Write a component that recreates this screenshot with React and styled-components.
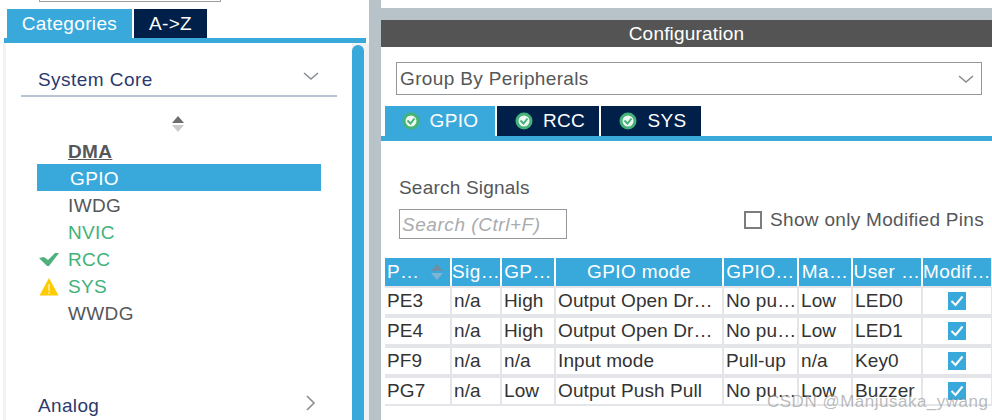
import React from 'react';
import styled, { createGlobalStyle } from 'styled-components';

const blue = '#39a9dc';
const navy = '#00204a';
const slate = '#b8c3c9';

const columns = '65px 48px 52px 166px 73px 52px 68px 68px';

const headers = ['P…', 'Sig…', 'GP…', 'GPIO mode', 'GPIO…', 'Ma…', 'User …', 'Modif…'];
const rows = [
  ['PE3', 'n/a', 'High', 'Output Open Dr…', 'No pu…', 'Low', 'LED0'],
  ['PE4', 'n/a', 'High', 'Output Open Dr…', 'No pu…', 'Low', 'LED1'],
  ['PF9', 'n/a', 'n/a', 'Input mode', 'Pull-up', 'n/a', 'Key0'],
  ['PG7', 'n/a', 'Low', 'Output Push Pull', 'No pu…', 'Low', 'Buzzer'],
];

const peripherals = [
  { name: 'DMA', kind: 'bold' },
  { name: 'GPIO', kind: 'selected' },
  { name: 'IWDG' },
  { name: 'NVIC', kind: 'green' },
  { name: 'RCC', kind: 'green', icon: 'check' },
  { name: 'SYS', kind: 'green', icon: 'warn' },
  { name: 'WWDG' },
];

const Chevron = ({ right }) => (
  <ChevronIcon width="16" height="16" viewBox="0 0 16 16">
    <path
      d={right ? 'M5 1l7 7-7 7' : 'M1 5l7 6 7-6'}
      fill="none"
      stroke="#8a8d90"
      strokeWidth="1.6"
    />
  </ChevronIcon>
);

const SortArrows = ({ light }) => (
  <svg width="14" height="18" viewBox="0 0 14 18">
    <path d="M7 1L13 8H1z" fill={light ? '#6f8ea3' : '#6b6d6e'} />
    <path d="M7 17L13 10H1z" fill={light ? '#7fb4d3' : '#c9cbcc'} />
  </svg>
);

const GreenCheck = () => (
  <svg width="20" height="16" viewBox="0 0 20 16">
    <path d="M0 6l5-1 4 3 7-7 4 0-10 13h-2z" fill="#4fb07e" />
  </svg>
);

const WarnIcon = () => (
  <svg width="20" height="18" viewBox="0 0 20 18">
    <path d="M10 0l9.500 17.500H.5z" fill="#fdcb00" />
    <path d="M9.500 6h1v7h-1z" fill="#fff" />
    <path d="M9.500 14h1v2h-1z" fill="#fff" />
  </svg>
);

const TabStatus = () => (
  <svg width="18" height="18" viewBox="0 0 18 18">
    <circle cx="9" cy="9" r="8.500" fill="#45b378" />
    <circle cx="9" cy="9" r="5.500" fill="#eef7f2" />
    <path d="M5.500 8.500l3 3 4-5" fill="none" stroke="#45b378" strokeWidth="2" />
  </svg>
);

const Tick = () => (
  <CheckBoxOn>
    <svg width="14" height="12" viewBox="0 0 14 12">
      <path d="M1.500 6l4 4 7-8.500" fill="none" stroke="#fff" strokeWidth="2" />
    </svg>
  </CheckBoxOn>
);

const App = () => (
  <Page>
    <GlobalStyle />
    <LeftPanel>
      <TreeSearch />
      <CategoryTabs>
        <CategoryTab $active>Categories</CategoryTab>
        <CategoryTab>A-&gt;Z</CategoryTab>
      </CategoryTabs>
      <TabRule />
      <TreeBody>
        <TreeContent>
          <GroupHead>
            <span>System Core</span>
            <Chevron />
          </GroupHead>
          <SortRow>
            <SortArrows />
          </SortRow>
          <PeripheralList>
            {peripherals.map((p) => (
              <Peripheral key={p.name} $kind={p.kind}>
                <StatusSlot $kind={p.kind}>
                  {p.icon === 'check' && <GreenCheck />}
                  {p.icon === 'warn' && <WarnIcon />}
                </StatusSlot>
                {p.name}
              </Peripheral>
            ))}
          </PeripheralList>
          <CollapsedGroup>
            <span>Analog</span>
            <Chevron right />
          </CollapsedGroup>
        </TreeContent>
        <ScrollBar />
      </TreeBody>
    </LeftPanel>
    <Gutter />
    <RightPanel>
      <TopStrip />
      <PanelTitle>Configuration</PanelTitle>
      <GroupSelect>
        <span>Group By Peripherals</span>
        <Chevron />
      </GroupSelect>
      <ModeTabs>
        <ModeTab $active $width={110}><TabStatus />GPIO</ModeTab>
        <ModeTab $width={102}><TabStatus />RCC</ModeTab>
        <ModeTab $width={100}><TabStatus />SYS</ModeTab>
      </ModeTabs>
      <SearchArea>
        <SearchColumn>
          <SearchLabel>Search Signals</SearchLabel>
          <SearchBox>Search (Ctrl+F)</SearchBox>
        </SearchColumn>
        <ModifiedToggle>
          <CheckBoxOff />
          Show only Modified Pins
        </ModifiedToggle>
      </SearchArea>
      <Table>
        <HeaderRow>
          {headers.map((h, i) => (
            <HeaderCell key={h} $first={i === 0}>
              {h}
              {i === 0 && <SortArrows light />}
            </HeaderCell>
          ))}
        </HeaderRow>
        {rows.map((row) => (
          <BodyRow key={row[0]}>
            {row.map((value, i) => (
              <BodyCell key={i}>{value}</BodyCell>
            ))}
            <TickCell>
              <Tick />
            </TickCell>
          </BodyRow>
        ))}
      </Table>
    </RightPanel>
    <Watermark>CSDN @Manjusaka_ywang</Watermark>
  </Page>
);

const GlobalStyle = createGlobalStyle`
  html, body {
    margin: 0;
    padding: 0;
    background: #fff;
  }
  body {
    font-family: "Liberation Sans", Arial, sans-serif;
    font-size: 19px;
    letter-spacing: 0.35px;
  }
`;

const Page = styled.div`
  position: relative;
  display: flex;
  width: 992px;
  height: 420px;
  overflow: hidden;
`;

const LeftPanel = styled.div`
  display: flex;
  flex-direction: column;
  width: 369px;
`;

const TreeSearch = styled.div`
  width: 180px;
  height: 1px;
  margin-left: 39px;
  border: 1px solid #9a9c9e;
  border-top: 0;
`;

const CategoryTabs = styled.div`
  display: flex;
  gap: 2px;
  margin-top: 7px;
  padding-left: 7px;
`;

const CategoryTab = styled.div`
  display: flex;
  align-items: center;
  justify-content: center;
  box-sizing: border-box;
  height: 29px;
  width: ${(p) => (p.$active ? '125px' : '73px')};
  color: #fff;
  background: ${(p) => (p.$active ? blue : navy)};
`;

const TabRule = styled.div`
  flex: none;
  height: 5px;
  margin: 0 3px 0 4px;
  background: ${blue};
`;

const TreeBody = styled.div`
  display: flex;
  flex: 1;
  margin-left: 3px;
  padding-right: 5px;
  border-left: 3px solid #f0f2f3;
  background: #f0f2f3;
`;

const TreeContent = styled.div`
  flex: 1;
  padding: 20px 15px 0 15px;
  background: #fff;
  min-width: 0;
`;

const ScrollBar = styled.div`
  width: 12px;
  margin-top: 2px;
  border-radius: 6px 6px 0 0;
  background: ${blue};
`;

const GroupHead = styled.div`
  display: flex;
  align-items: center;
  justify-content: space-between;
  height: 32px;
  padding: 0 18px 0 17px;
  border-bottom: 2px solid #b8c4d2;
  color: #2c3a6e;
  letter-spacing: 0.45px;
  span {
    margin-top: 1px;
  }
`;

const ChevronIcon = styled.svg`
  flex: none;
  margin-bottom: 6px;
`;

const SortRow = styled.div`
  display: flex;
  justify-content: center;
  height: 18px;
  margin-top: 18px;
  padding-right: 2px;
`;

const PeripheralList = styled.div`
  display: flex;
  flex-direction: column;
  margin: 4px 16px 0 16px;
`;

const Peripheral = styled.div`
  display: flex;
  align-items: center;
  box-sizing: border-box;
  height: 27px;
  padding-top: 2px;
  color: ${(p) =>
    p.$kind === 'selected' ? '#fff' : p.$kind === 'green' ? '#3fb27a' : '#555759'};
  background: ${(p) => (p.$kind === 'selected' ? blue : 'transparent')};
  font-weight: ${(p) => (p.$kind === 'bold' ? 700 : 400)};
  text-decoration: ${(p) => (p.$kind === 'bold' ? 'underline' : 'none')};
`;

const StatusSlot = styled.span`
  display: flex;
  align-items: center;
  flex: none;
  width: ${(p) => (p.$kind === 'selected' ? '33px' : '31px')};
  padding-left: 2px;
  box-sizing: border-box;
`;

const CollapsedGroup = styled.div`
  display: flex;
  align-items: center;
  justify-content: space-between;
  margin-top: 69px;
  padding: 0 19px 0 17px;
  color: #2c3a6e;
`;

const Gutter = styled.div`
  width: 12px;
  background: ${slate};
`;

const RightPanel = styled.div`
  display: flex;
  flex-direction: column;
  flex: 1;
  min-width: 0;
`;

const TopStrip = styled.div`
  height: 12px;
  margin-top: 8px;
  background: ${slate};
`;

const PanelTitle = styled.div`
  display: flex;
  align-items: center;
  justify-content: center;
  height: 27px;
  color: #fff;
  background: #535453;
  letter-spacing: 0.2px;
`;

const GroupSelect = styled.div`
  display: flex;
  align-items: center;
  justify-content: space-between;
  box-sizing: border-box;
  width: 586px;
  height: 33px;
  margin: 15px 0 0 15px;
  padding: 0 7px 0 3px;
  border: 1px solid #93979b;
  color: #555759;
  svg {
    margin-bottom: 0;
  }
`;

const ModeTabs = styled.div`
  display: flex;
  gap: 2px;
  margin-top: 11px;
  padding-left: 4px;
  height: 30px;
  border-bottom: 5px solid ${blue};
`;

const ModeTab = styled.div`
  display: flex;
  align-items: center;
  justify-content: center;
  box-sizing: border-box;
  gap: 10px;
  width: ${(p) => p.$width}px;
  padding-left: ${(p) => (p.$active ? 0 : 4)}px;
  color: #fff;
  background: ${(p) => (p.$active ? blue : navy)};
`;

const SearchArea = styled.div`
  display: flex;
  align-items: flex-end;
  justify-content: space-between;
  height: 98px;
  padding: 0 8px 0 18px;
  margin-bottom: 19px;
  box-sizing: border-box;
`;

const SearchColumn = styled.div`
  display: flex;
  flex-direction: column;
  gap: 10px;
`;

const SearchLabel = styled.div`
  color: #555759;
  letter-spacing: 0.2px;
`;

const SearchBox = styled.div`
  box-sizing: border-box;
  width: 168px;
  height: 30px;
  padding: 4px 2px;
  border: 1px solid #93979b;
  color: #a9abad;
  font-style: italic;
  letter-spacing: 0.55px;
`;

const ModifiedToggle = styled.label`
  display: flex;
  align-items: center;
  gap: 8px;
  height: 20px;
  margin-bottom: 9px;
  color: #555759;
  letter-spacing: 0.3px;
`;

const CheckBoxOff = styled.span`
  box-sizing: border-box;
  width: 18px;
  height: 18px;
  border: 2px solid #7b7d80;
`;

const Table = styled.div`
  display: flex;
  flex-direction: column;
`;

const HeaderRow = styled.div`
  display: grid;
  grid-template-columns: ${columns};
  gap: 2px;
  height: 28px;
  margin-left: 4px;
`;

const HeaderCell = styled.div`
  display: flex;
  align-items: center;
  justify-content: ${(p) => (p.$first ? 'space-between' : 'center')};
  padding: ${(p) => (p.$first ? '0 6px 0 2px' : '0')};
  overflow: hidden;
  white-space: nowrap;
  color: #fff;
  background: ${blue};
  letter-spacing: 0.4px;
`;

const BodyRow = styled.div`
  display: grid;
  grid-template-columns: ${columns};
  gap: 2px;
  height: 30px;
  margin-left: 4px;
  box-sizing: border-box;
  padding-top: 2px;
  border-bottom: 2px solid #e3e5e9;
  background: linear-gradient(#e3e5e9, #e3e5e9);
  letter-spacing: 0.1px;
`;

const BodyCell = styled.div`
  display: flex;
  align-items: center;
  padding-left: 2px;
  white-space: nowrap;
  overflow: hidden;
  color: #333;
  background: #fff;
`;

const TickCell = styled(BodyCell)`
  justify-content: center;
  padding-left: 0;
`;

const CheckBoxOn = styled.span`
  display: flex;
  align-items: center;
  justify-content: center;
  width: 18px;
  height: 18px;
  background: ${blue};
`;

const Watermark = styled.div`
  position: absolute;
  left: 767px;
  top: 392px;
  color: rgba(130, 130, 130, 0.55);
  font-size: 17px;
  letter-spacing: 0.5px;
  text-shadow: 1px 1px 1px rgba(255, 255, 255, 0.6);
`;

export default App;
